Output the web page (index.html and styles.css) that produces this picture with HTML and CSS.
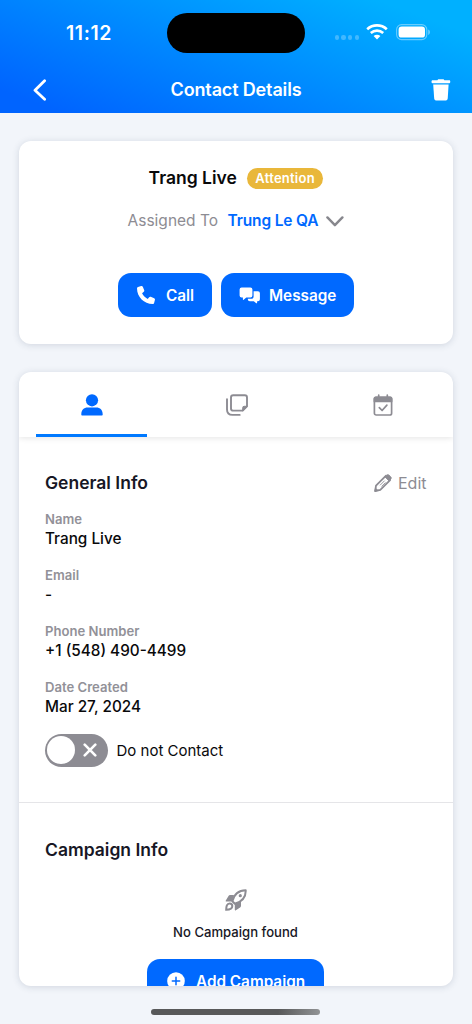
FILE: index.html
```html
<!DOCTYPE html>
<html lang="en">
<head>
<meta charset="utf-8">
<title>Contact Details</title>
<link rel="stylesheet" href="styles.css">
</head>
<body>
<div class="screen">
  <header class="header">
    <div class="status">
      <span class="time">11:12</span>
      <span class="island"></span>
      <div class="signals">
        <span class="cell"><i></i><i></i><i></i><i></i></span>
        <svg class="wifi" width="22" height="16" viewBox="0 0 22 16" fill="none" stroke="#fff"><path d="M1.2 5.2C6.8.2 15.2.2 20.8 5.2" stroke-width="2.7"/><path d="M4.8 9C8.4 5.8 13.6 5.8 17.2 9" stroke-width="2.6"/><path d="M11 15.6 7.6 12.1C9.5 10.4 12.5 10.4 14.4 12.1Z" fill="#fff" stroke="none"/></svg>
        <svg class="battery" width="35" height="17" viewBox="0 0 35 17"><rect x=".6" y=".6" width="30.2" height="15" rx="5" fill="none" stroke="#fff" stroke-opacity=".4" stroke-width="1.1"/><rect x="2.6" y="2.6" width="26.4" height="11" rx="3.2" fill="#fff"/><path d="M32.3 5.5c2 .8 2 4.6 0 5.4z" fill="#fff" fill-opacity=".5"/></svg>
      </div>
    </div>
    <nav class="nav">
      <svg class="back" width="14" height="22" viewBox="0 0 14 22" fill="none" stroke="#fff" stroke-width="2.8" stroke-linecap="round" stroke-linejoin="round"><path d="M11.6 1.7 2 11.2l9.6 9"/></svg>
      <h1 class="title">Contact Details</h1>
      <svg class="trash" width="20" height="22" viewBox="0 0 20 22" fill="#fff"><path d="M1.4 1.3h5L7.2.2h5.4l.8 1.1h5c1.2 0 1.2 2.9 0 2.9h-17c-1.2 0-1.2-2.9 0-2.9z"/><path d="M2.2 5.4h15.4l-.9 14.2c-.1 1.2-.7 1.8-1.8 1.8H5c-1.1 0-1.7-.6-1.8-1.8z"/></svg>
    </nav>
  </header>

  <section class="card contact">
    <div class="who"><h2 class="name">Trang Live</h2><span class="tag">Attention</span></div>
    <div class="assigned">
      <span class="assigned-label">Assigned To</span><span class="assignee">Trung Le QA</span>
      <svg class="chevron" width="18" height="11" viewBox="0 0 18 11" fill="none" stroke="#87878d" stroke-width="2.4" stroke-linecap="round" stroke-linejoin="round"><path d="m1.4 1.4 7.5 7.8 7.5-7.8"/></svg>
    </div>
    <div class="actions">
      <button class="button call">
        <svg width="18" height="18" viewBox="0 0 512 512" fill="#fff"><path d="M164.9 24.6c-7.7-18.6-28-28.5-47.4-23.2l-88 24C12.1 30.2 0 46 0 64c0 247.4 200.6 448 448 448 18 0 33.8-12.1 38.6-29.5l24-88c5.3-19.4-4.6-39.7-23.2-47.4l-96-40c-16.3-6.8-35.2-2.1-46.3 11.6L304.7 368C234.3 334.7 177.3 277.7 144 207.3L193.3 167c13.7-11.2 18.4-30 11.6-46.3l-40-96z"/></svg>
        <span>Call</span>
      </button>
      <button class="button message">
        <svg width="22" height="17" viewBox="0 0 22 17" fill="#fff"><path d="M2.6.4h8.8a2 2 0 0 1 2 2v6.2a2 2 0 0 1-2 2H7.3l-2.6 2.2c-.4.3-.8.1-.8-.4v-1.8H2.6a2 2 0 0 1-2-2V2.4a2 2 0 0 1 2-2z"/><path d="M14.6 4.3h4.3a2 2 0 0 1 2 2v6a2 2 0 0 1-2 2h-.8v1.5c0 .5-.4.7-.8.4l-2.5-1.900h-4a2 2 0 0 1-2-2v-.5h3.400c1.500 0 2.400-1 2.400-2.400z"/></svg>
        <span>Message</span>
      </button>
    </div>
  </section>

  <main class="card details">
    <div class="tabs">
      <div class="tab active"><svg width="22" height="22" viewBox="0 0 22 22" fill="#0069ff"><circle cx="11" cy="6.300" r="6.100"/><path d="M.3 20.400c0-4.400 2.500-6.800 6.500-6.800h8.400c4 0 6.500 2.400 6.500 6.800 0 .7-.4 1-1 1H1.300c-.6 0-1-.3-1-1z"/></svg></div>
      <div class="tab notes"><svg width="22" height="22" viewBox="0 0 22 22" fill="none" stroke="#8d8c93" stroke-width="1.900" stroke-linecap="round" stroke-linejoin="round"><path d="M7.200 1.200h11.600c1.400 0 2.200.8 2.200 2.200v8.900l-4.300 4.300H7.200c-1.400 0-2.200-.8-2.200-2.200v-11c0-1.400.8-2.200 2.200-2.200z"/><path d="M21 12.300h-2.900c-.9 0-1.400.5-1.400 1.400v2.900z" fill="#8d8c93" stroke-width="1"/><path d="M1 5.300v10.200c0 3.500 2 5.400 5.500 5.400h7.200"/></svg></div>
      <div class="tab calendar"><svg width="20" height="22" viewBox="0 0 20 22" fill="none" stroke="#8d8c93" stroke-width="1.700" stroke-linecap="round" stroke-linejoin="round"><rect x="1.400" y="3.400" width="17.200" height="17.600" rx="1.800"/><path d="M1.400 4.500c0-.7.4-1.100 1.100-1.100h15c.7 0 1.100.4 1.100 1.100v3H1.400z" fill="#8d8c93"/><path d="M5.700 1v3M14.300 1v3m-8 9.600 2.800 2.900 4.800-5.400"/></svg></div>
    </div>
    <section class="general">
      <div class="section-head">
        <h3 class="heading">General Info</h3>
        <div class="edit"><svg width="18" height="18" viewBox="0 0 18 18" fill="none" stroke="#8d8c93" stroke-linejoin="round"><path d="M2 11.600 11.800 1.800l4.300 4.300L6.300 15.900 1.200 17z" stroke-width="1.800"/><path d="m10.900 2.700 1.700-1.500c1-.7 1.800-.6 2.600.1l1.400 1.400c.8.8.8 1.600.1 2.500l-1.600 1.800z" fill="#8d8c93"/><path d="m1.500 14.200 2.400 2.300-3.100.8z" fill="#8d8c93"/><path d="m6 11.300 4.600-4.600m-3 5.800 4-4" stroke-width=".9"/></svg><span>Edit</span></div>
      </div>
      <dl class="fields">
        <div class="field"><dt>Name</dt><dd>Trang Live</dd></div>
        <div class="field"><dt>Email</dt><dd>-</dd></div>
        <div class="field"><dt>Phone Number</dt><dd>+1 (548) 490-4499</dd></div>
        <div class="field"><dt>Date Created</dt><dd>Mar 27, 2024</dd></div>
      </dl>
      <div class="toggle-row">
        <div class="toggle"><span class="knob"></span><svg width="14" height="14" viewBox="0 0 14 14" stroke="#fff" stroke-width="2.600" stroke-linecap="round"><path d="m1.700 1.700 10.600 10.600m0-10.600L1.700 12.300"/></svg></div>
        <span class="toggle-label">Do not Contact</span>
      </div>
    </section>
    <section class="campaign">
      <h3 class="heading">Campaign Info</h3>
      <div class="empty">
        <svg width="22" height="22" viewBox="0 0 22 22" fill="none" stroke="#8d8c93"><path d="M7.400 12.300C9 5.500 13 1.300 20.700 1.200c.3 7-3.600 11.400-10.900 13.600z" stroke-width="2" stroke-linejoin="round"/><circle cx="15.300" cy="6.700" r="1.600" fill="#8d8c93" stroke="none"/><path d="M9 6H5.100c-.8 0-1.200.3-1.600.9L.8 11.600c-.3.600-.1 1 .6 1h5.800zM16 12.700v4c0 .8-.3 1.300-.9 1.700l-4.200 2.900c-.6.400-1.100.2-1.100-.5v-6z" fill="#8d8c93" stroke="none"/><path d="M1.200 20.800c0-3.300.6-6.300 3.500-6.300 1.500 0 2.600 1.100 2.600 2.600 0 2.900-2.900 3.700-6.100 3.700z" stroke-width="2"/></svg>
        <p class="empty-text">No Campaign found</p>
        <button class="button add"><svg width="18" height="18" viewBox="0 0 18 18"><circle cx="9" cy="9" r="8.800" fill="#fff"/><path d="M9 5.300v7.400M5.300 9h7.400" stroke="#0069ff" stroke-width="1.500" stroke-linecap="round"/></svg><span>Add Campaign</span></button>
      </div>
    </section>
  </main>
  <div class="home-bar"></div>
</div>
</body>
</html>
```
FILE: styles.css
```css
* { box-sizing: border-box; margin: 0; padding: 0; }
body { background: #f2f5fa; font-family: Inter, "Liberation Sans", sans-serif; color: #0b0b0d; }
svg { display: block; flex: none; }
.screen { width: 472px; height: 1024px; overflow: hidden; display: flex; flex-direction: column; }

.header { height: 113px; flex: none; background: linear-gradient(20deg, #0064ff 8%, #00b0ff 88%); color: #fff; }
.status { height: 66px; display: grid; grid-template-columns: 167px 138px 167px; align-items: center; }
.time { padding-left: 66px; font-size: 19.5px; line-height: 24px; font-weight: 600; letter-spacing: 0.6px; }
.island { height: 40px; border-radius: 20px; background: #000; }
.signals { display: flex; align-items: center; padding-left: 29.5px; }
.cell { display: flex; gap: 2.4px; margin: 9px 7px 0 0; }
.cell i { width: 4.4px; height: 4.4px; border-radius: 50%; background: rgba(255,255,255,.26); }
.wifi { margin: -2px 8px 0 0; }
.battery { margin-top: -1px; }
.nav { height: 47px; display: grid; grid-template-columns: 66px 1fr 66px; align-items: center; }
.back { margin-left: 33px; }
.title { font-size: 18px; line-height: 24px; font-weight: 600; letter-spacing: -0.15px; text-align: center; }
.trash { margin-left: 25px; }

.card { width: 434px; margin-left: 19px; background: #fff; border-radius: 12px; box-shadow: 0 1px 7px rgba(40,60,90,.17); flex: none; }
.contact { margin-top: 28px; height: 203px; padding-top: 25px; display: flex; flex-direction: column; align-items: center; }
.who { display: flex; align-items: center; gap: 10px; height: 24px; }
.name { font-size: 17.5px; line-height: 26px; font-weight: 600; color: #09090b; }
.tag { height: 21px; line-height: 21px; padding: 0 8.5px 0 8.5px; border-radius: 11px; background: #e9b73a; color: #fff; font-size: 13px; letter-spacing: 0.25px; font-weight: 600; }
.assigned { display: flex; align-items: center; height: 24px; margin-top: 18px; font-size: 15.5px; line-height: 24px; }
.assigned-label, .assignee { padding-top: 1px; }
.assigned-label { color: #8d8c93; margin-right: 9.5px; }
.assignee { color: #0069ff; font-weight: 600; letter-spacing: -0.15px; margin-right: 8px; }
.chevron { margin-top: 3px; }
.actions { display: flex; gap: 9px; margin-top: 41px; }
.button { display: flex; align-items: center; height: 44px; border: 0; border-radius: 13px; background: #0069ff; color: #fff; font: 600 15.3px/24px Inter, "Liberation Sans", sans-serif; white-space: nowrap; }
.button span { padding-top: 1px; }
.call { width: 94px; padding-left: 19px; gap: 11px; }
.message { width: 133px; padding-left: 18px; gap: 8px; }

.details { margin-top: 28px; height: 613.5px; overflow: hidden; }
.tabs { height: 65px; display: grid; grid-template-columns: repeat(3, 1fr); box-shadow: 0 1px 6px rgba(0,0,0,.11); }
.tab { display: flex; justify-content: center; align-items: flex-start; padding-top: 22px; }
.tab.active { width: 111px; margin-left: 17px; border-bottom: 3px solid #0079ff; }
.notes { padding-left: 2px; }
.calendar { padding-left: 4px; }
.general { height: 366px; padding: 34px 26.5px 0 26px; border-bottom: 1px solid #e5e5e8; }
.section-head { height: 24px; display: flex; justify-content: space-between; align-items: center; }
.heading { color: #171725; font-size: 17.5px; line-height: 24px; font-weight: 600; }
.edit { display: flex; align-items: center; gap: 6px; font-size: 16px; line-height: 24px; color: #8d8c93; }
.fields { margin-top: 15.4px; }
.field { height: 55.8px; }
.field dt { height: 19px; font-size: 13.1px; line-height: 19px; font-weight: 600; color: #929198; }
.field dd { height: 20px; font-size: 15.3px; line-height: 20px; font-weight: 500; color: #09090b; }
.toggle-row { display: flex; align-items: center; gap: 9px; }
.toggle { width: 62.5px; height: 33px; border-radius: 17px; background: #8d8c93; display: flex; align-items: center; padding-left: 2px; gap: 7.5px; }
.knob { width: 28px; height: 28px; border-radius: 50%; background: #fff; }
.toggle-label { padding-top: 1px; font-size: 15px; line-height: 24px; color: #09090b; }
.campaign { padding: 35px 27px 0 26px; }
.empty { display: flex; flex-direction: column; align-items: center; margin-top: 27px; }
.empty-text { margin-top: 11px; font-size: 13.1px; line-height: 20px; font-weight: 500; color: #171725; }
.add { width: 177px; margin-top: 17px; padding-left: 20px; gap: 11px; }
.home-bar { width: 169px; height: 6px; margin: 23px 0 0 151px; border-radius: 3px; background: linear-gradient(100deg, #58595a 75%, #929496); flex: none; }
```
